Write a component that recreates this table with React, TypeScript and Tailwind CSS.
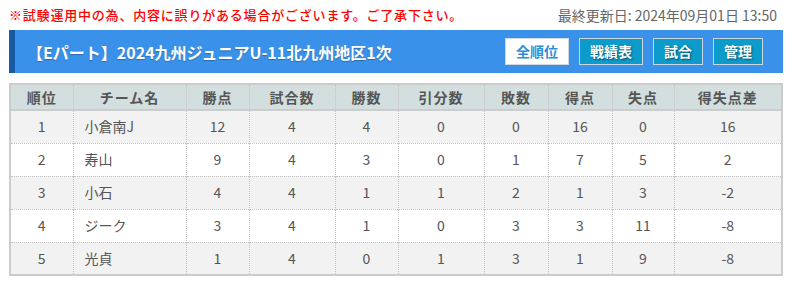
import React from "react";

const rows = [
  ["1", "小倉南J", "12", "4", "4", "0", "0", "16", "0", "16"],
  ["2", "寿山", "9", "4", "3", "0", "1", "7", "5", "2"],
  ["3", "小石", "4", "4", "1", "1", "2", "1", "3", "-2"],
  ["4", "ジーク", "3", "4", "1", "0", "3", "3", "11", "-8"],
  ["5", "光貞", "1", "4", "0", "1", "3", "1", "9", "-8"],
];

const heads = ["順位", "チーム名", "勝点", "試合数", "勝数", "引分数", "敗数", "得点", "失点", "得失点差"];
const widths = ["w-[63px]", "w-[113px]", "w-[63px]", "w-[86px]", "w-[63px]", "w-[86px]", "w-[64px]", "w-[64px]", "w-[62px]", "w-[108px]"];

export default function App() {
  return (
    <div
      className="w-[798px] h-[288px] bg-white pl-[9px] pr-[15px]"
      style={{ fontFamily: '"Noto Sans CJK JP", "Noto Sans", sans-serif' }}
    >
      <div className="h-[30px] flex items-center justify-between">
        <span className="text-[13px] text-[#ff0000] font-medium tracking-[0.8px]">※試験運用中の為、内容に誤りがある場合がございます。ご了承下さい。</span>
        <span className="text-[14px] text-[#666666] mr-[6px]">最終更新日: 2024年09月01日 13:50</span>
      </div>
      <div className="h-[43px] flex items-center justify-between bg-[#3a91e9] border-l-[6px] border-[#175ba5] pl-[12px] pr-[20px]">
        <h1 className="text-white text-[16px] font-bold [text-shadow:0_1px_1px_rgba(0,0,0,0.25)]">
          【Eパート】2024九州ジュニアU-11北九州地区1次
        </h1>
        <div className="flex gap-[10px]">
          <span className="h-[27px] px-[10px] flex items-center bg-white border border-[#d0d8e0] text-[#2a8fd6] text-[14px] font-bold">全順位</span>
          <span className="h-[27px] px-[10px] flex items-center bg-[#0d9bcb] border border-[#c8d6de] text-white text-[14px] font-bold [text-shadow:1px_1px_2px_rgba(0,0,0,0.5)]">戦績表</span>
          <span className="h-[27px] px-[10px] flex items-center bg-[#0d9bcb] border border-[#c8d6de] text-white text-[14px] font-bold [text-shadow:1px_1px_2px_rgba(0,0,0,0.5)]">試合</span>
          <span className="h-[27px] px-[10px] flex items-center bg-[#0d9bcb] border border-[#c8d6de] text-white text-[14px] font-bold [text-shadow:1px_1px_2px_rgba(0,0,0,0.5)]">管理</span>
        </div>
      </div>
      <table className="mt-[10px] w-full border-collapse border-2 border-[#cccccc] text-[14px] text-[#555555] table-fixed">
        <thead>
          <tr className="h-[26px] bg-[#d3dfdf] border-b-2 border-[#cccccc]">
            {heads.map((h, i) => (
              <th
                key={h}
                className={`${widths[i]} font-bold text-[#555555] text-center tracking-[1px] border-l border-dotted border-[#c4c4c4] first:border-l-0 p-0`}
              >
                {h}
              </th>
            ))}
          </tr>
        </thead>
        <tbody>
          {rows.map((r, ri) => (
            <tr key={ri} className={`h-[33px] ${ri % 2 === 0 ? "bg-[#f2f2f2]" : "bg-white"} border-t border-dotted border-[#c4c4c4] first:border-t-0`}>
              {r.map((c, ci) => (
                <td
                  key={ci}
                  className={`p-0 border-l border-dotted border-[#c4c4c4] first:border-l-0 ${ci === 1 ? "text-left pl-[11px]" : "text-center"}`}
                >
                  {c}
                </td>
              ))}
            </tr>
          ))}
        </tbody>
      </table>
    </div>
  );
}
